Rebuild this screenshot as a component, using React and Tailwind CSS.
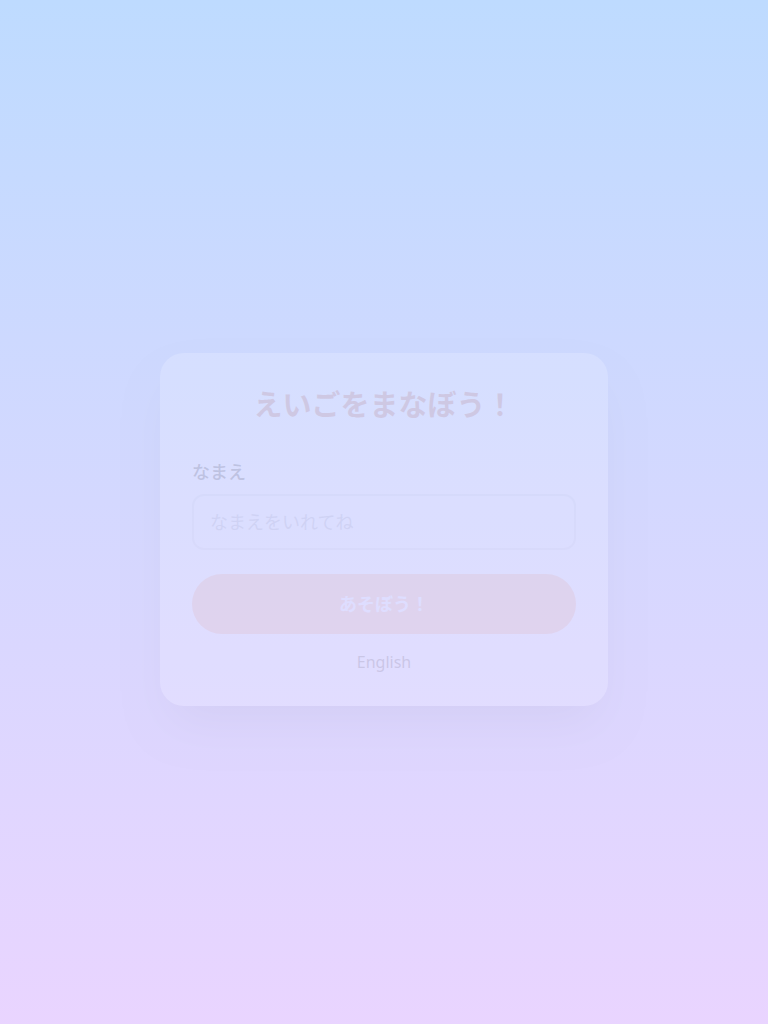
import { useState } from "react";

export default function App() {
    const [name, setName] = useState("");

    return (
        <div
            className="min-h-screen w-full flex items-center justify-center bg-gradient-to-b from-blue-200 to-purple-200 px-4"
            style={{ fontFamily: '"Noto Sans", "Noto Sans CJK JP", sans-serif' }}
        >
            {/* card, caught mid fade-in */}
            <div className="w-full max-w-md bg-white rounded-3xl shadow-2xl p-8 opacity-[0.16] translate-y-[17px]">
                <h1 className="text-[29px] leading-9 font-bold text-center text-[#c9775a] mt-[2px] mb-[35px]">
                    えいごをまなぼう！
                </h1>

                <label className="block text-lg font-medium text-stone-600 mb-2">
                    なまえ
                </label>
                <input
                    type="text"
                    value={name}
                    onChange={(e) => setName(e.target.value)}
                    placeholder="なまえをいれてね"
                    className="w-full px-4 py-3 text-lg border-2 border-gray-200 rounded-xl outline-none placeholder:text-[#b4b8c0]"
                />

                <button className="w-full mt-6 py-4 rounded-full bg-[#ffbf9c] text-white text-lg leading-7 font-bold">
                    あそぼう！
                </button>

                <button className="block mx-auto mt-4 text-base text-stone-500">
                    English
                </button>
            </div>
        </div>
    );
}
